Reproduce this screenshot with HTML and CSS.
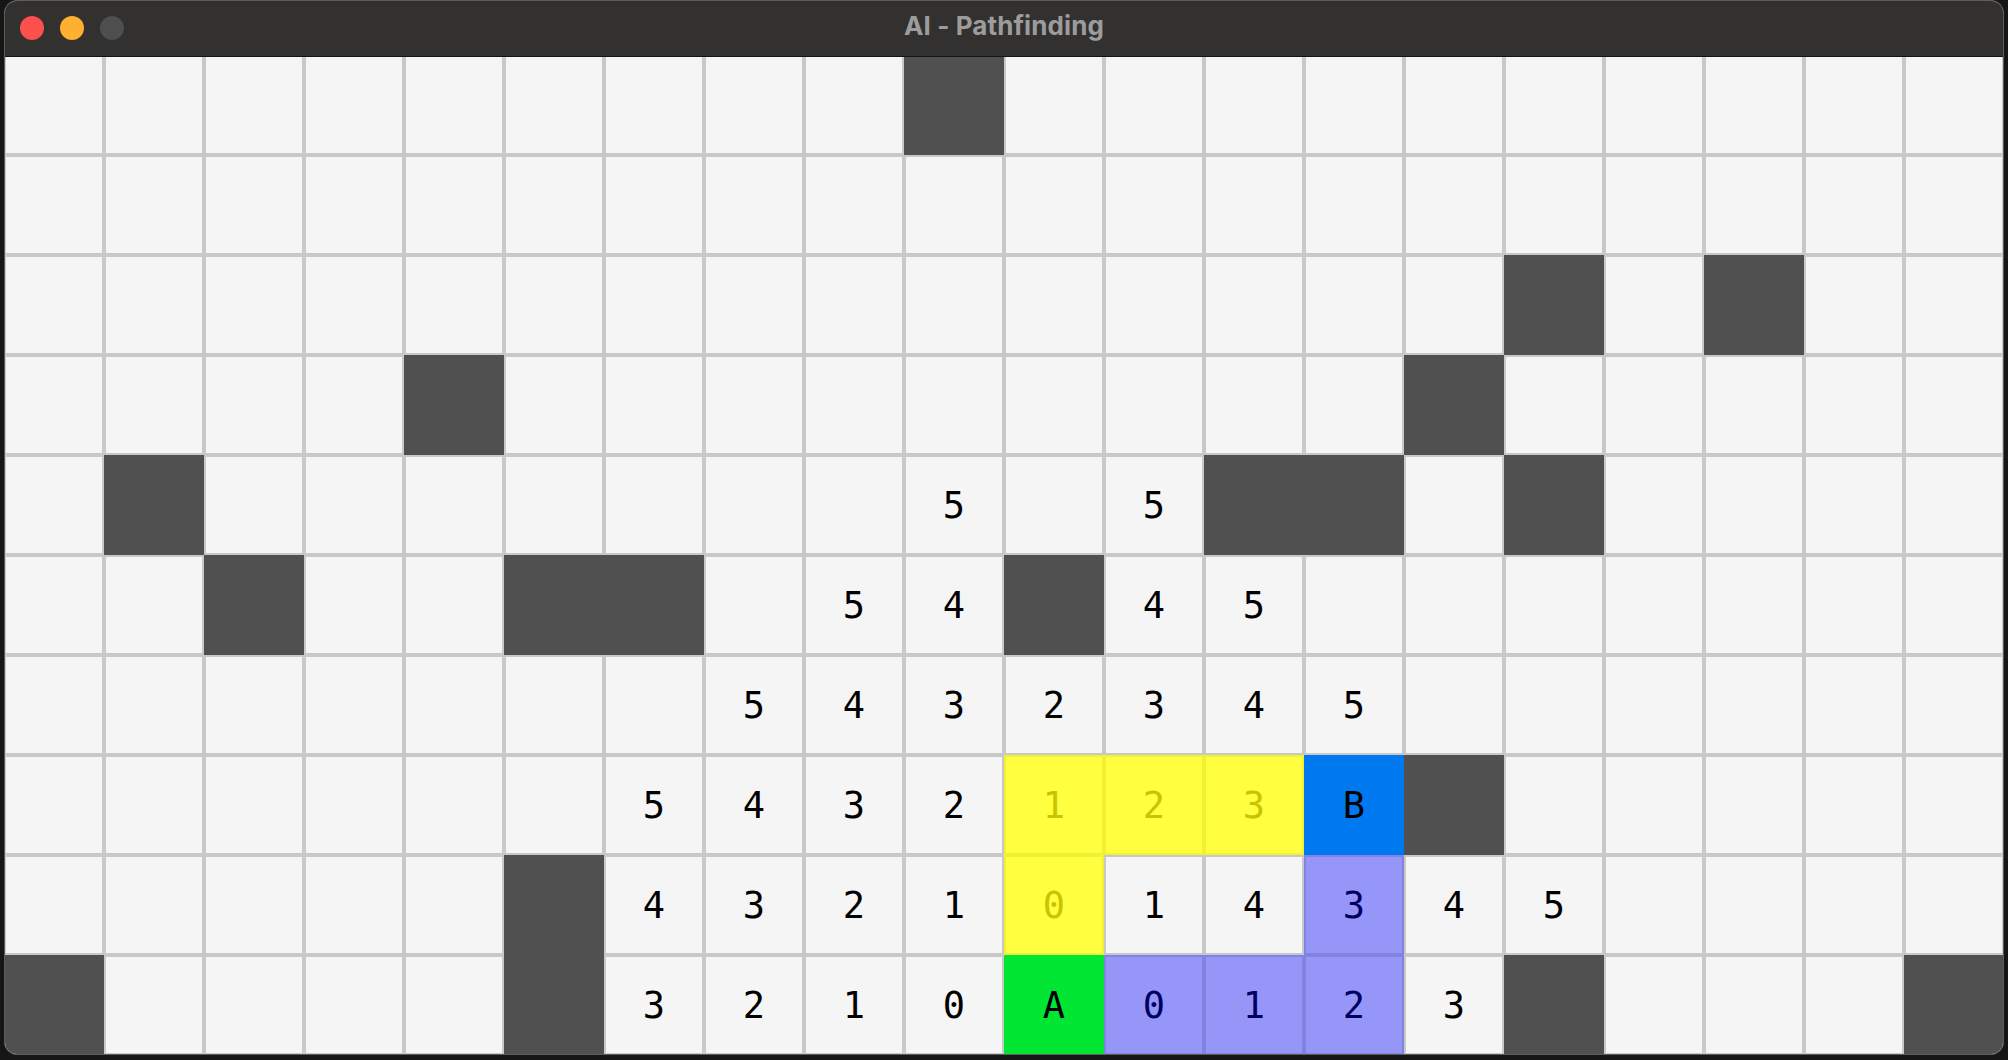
FILE: index.html
```html
<!DOCTYPE html>
<html>
<head>
<meta charset="utf-8">
<title>AI - Pathfinding</title>
<link rel="stylesheet" href="styles.css">
</head>
<body>
<div class="window">
  <div class="titlebar">
    <div class="lights">
      <span class="light red"></span>
      <span class="light amber"></span>
      <span class="light off"></span>
    </div>
    <div class="title">AI - Pathfinding</div>
  </div>
  <div class="grid">
    <!-- row 0 -->
    <div class="c"></div><div class="c"></div><div class="c"></div><div class="c"></div><div class="c"></div>
    <div class="c"></div><div class="c"></div><div class="c"></div><div class="c"></div><div class="c w"></div>
    <div class="c"></div><div class="c"></div><div class="c"></div><div class="c"></div><div class="c"></div>
    <div class="c"></div><div class="c"></div><div class="c"></div><div class="c"></div><div class="c"></div>
    <!-- row 1 -->
    <div class="c"></div><div class="c"></div><div class="c"></div><div class="c"></div><div class="c"></div>
    <div class="c"></div><div class="c"></div><div class="c"></div><div class="c"></div><div class="c"></div>
    <div class="c"></div><div class="c"></div><div class="c"></div><div class="c"></div><div class="c"></div>
    <div class="c"></div><div class="c"></div><div class="c"></div><div class="c"></div><div class="c"></div>
    <!-- row 2 -->
    <div class="c"></div><div class="c"></div><div class="c"></div><div class="c"></div><div class="c"></div>
    <div class="c"></div><div class="c"></div><div class="c"></div><div class="c"></div><div class="c"></div>
    <div class="c"></div><div class="c"></div><div class="c"></div><div class="c"></div><div class="c"></div>
    <div class="c w"></div><div class="c"></div><div class="c w"></div><div class="c"></div><div class="c"></div>
    <!-- row 3 -->
    <div class="c"></div><div class="c"></div><div class="c"></div><div class="c"></div><div class="c w"></div>
    <div class="c"></div><div class="c"></div><div class="c"></div><div class="c"></div><div class="c"></div>
    <div class="c"></div><div class="c"></div><div class="c"></div><div class="c"></div><div class="c w"></div>
    <div class="c"></div><div class="c"></div><div class="c"></div><div class="c"></div><div class="c"></div>
    <!-- row 4 -->
    <div class="c"></div><div class="c w"></div><div class="c"></div><div class="c"></div><div class="c"></div>
    <div class="c"></div><div class="c"></div><div class="c"></div><div class="c"></div><div class="c">5</div>
    <div class="c"></div><div class="c">5</div><div class="c w"></div><div class="c w"></div><div class="c"></div>
    <div class="c w"></div><div class="c"></div><div class="c"></div><div class="c"></div><div class="c"></div>
    <!-- row 5 -->
    <div class="c"></div><div class="c"></div><div class="c w"></div><div class="c"></div><div class="c"></div>
    <div class="c w"></div><div class="c w"></div><div class="c"></div><div class="c">5</div><div class="c">4</div>
    <div class="c w"></div><div class="c">4</div><div class="c">5</div><div class="c"></div><div class="c"></div>
    <div class="c"></div><div class="c"></div><div class="c"></div><div class="c"></div><div class="c"></div>
    <!-- row 6 -->
    <div class="c"></div><div class="c"></div><div class="c"></div><div class="c"></div><div class="c"></div>
    <div class="c"></div><div class="c"></div><div class="c">5</div><div class="c">4</div><div class="c">3</div>
    <div class="c">2</div><div class="c">3</div><div class="c">4</div><div class="c">5</div><div class="c"></div>
    <div class="c"></div><div class="c"></div><div class="c"></div><div class="c"></div><div class="c"></div>
    <!-- row 7 -->
    <div class="c"></div><div class="c"></div><div class="c"></div><div class="c"></div><div class="c"></div>
    <div class="c"></div><div class="c">5</div><div class="c">4</div><div class="c">3</div><div class="c">2</div>
    <div class="c y">1</div><div class="c y">2</div><div class="c y">3</div><div class="c b">B</div><div class="c w"></div>
    <div class="c"></div><div class="c"></div><div class="c"></div><div class="c"></div><div class="c"></div>
    <!-- row 8 -->
    <div class="c"></div><div class="c"></div><div class="c"></div><div class="c"></div><div class="c"></div>
    <div class="c w"></div><div class="c">4</div><div class="c">3</div><div class="c">2</div><div class="c">1</div>
    <div class="c y">0</div><div class="c">1</div><div class="c">4</div><div class="c p">3</div><div class="c">4</div>
    <div class="c">5</div><div class="c"></div><div class="c"></div><div class="c"></div><div class="c"></div>
    <!-- row 9 -->
    <div class="c w"></div><div class="c"></div><div class="c"></div><div class="c"></div><div class="c"></div>
    <div class="c w"></div><div class="c">3</div><div class="c">2</div><div class="c">1</div><div class="c">0</div>
    <div class="c g">A</div><div class="c p">0</div><div class="c p">1</div><div class="c p">2</div><div class="c">3</div>
    <div class="c w"></div><div class="c"></div><div class="c"></div><div class="c"></div><div class="c w"></div>
  </div>
</div>
</body>
</html>
```
FILE: styles.css
```css
html, body {
  margin: 0;
  padding: 0;
  background: #161616;
}

body {
  width: 2008px;
  height: 1060px;
  overflow: hidden;
}

.window {
  box-sizing: border-box;
  width: 2000px;
  margin-left: 4px;
  border: 1px solid #5c5c5c;
  border-radius: 13px;
  overflow: hidden;
  background: #c8c8c8;
}

.titlebar {
  position: relative;
  height: 55px;
  background: #323130;
  border-bottom: 1px solid #141414;
  display: flex;
  align-items: center;
  justify-content: center;
}

.lights {
  position: absolute;
  left: 15px;
  top: 15px;
  display: flex;
  gap: 16px;
}

.light {
  width: 24px;
  height: 24px;
  border-radius: 50%;
  display: block;
}

.red { background: #fe4f4f; }
.amber { background: #ffb030; }
.off { background: #4e4e4e; }

.title {
  font-family: Inter, "Open Sans", "Liberation Sans", sans-serif;
  font-weight: 700;
  font-size: 26px;
  color: #9c9c9c;
  margin-top: -6px;
  letter-spacing: 0.1px;
}

.grid {
  display: grid;
  grid-template-columns: repeat(20, 96px);
  grid-auto-rows: 96px;
  gap: 4px;
  padding: 0 1px 1px 1px;
  background: #c8c8c8;
  overflow: hidden;
}

.c {
  background: #f5f5f5;
  display: flex;
  align-items: center;
  justify-content: center;
  font-family: "DejaVu Sans Mono", "Liberation Mono", monospace;
  font-size: 37px;
  line-height: 1;
  color: #000;
}

.w {
  background: #505050;
  box-shadow: 0 0 0 2px #505050;
}

.y {
  background: #ffff40;
  box-shadow: 0 0 0 2px #f0f034;
  color: #c8c400;
}

.b {
  background: #0078f0;
  box-shadow: 0 0 0 2px #0078f0;
}

.g {
  background: #00e632;
  box-shadow: 0 0 0 2px #00e632;
}

.p {
  background: #9696f8;
  box-shadow: 0 0 0 2px #8282e0;
  color: #000064;
}
```
